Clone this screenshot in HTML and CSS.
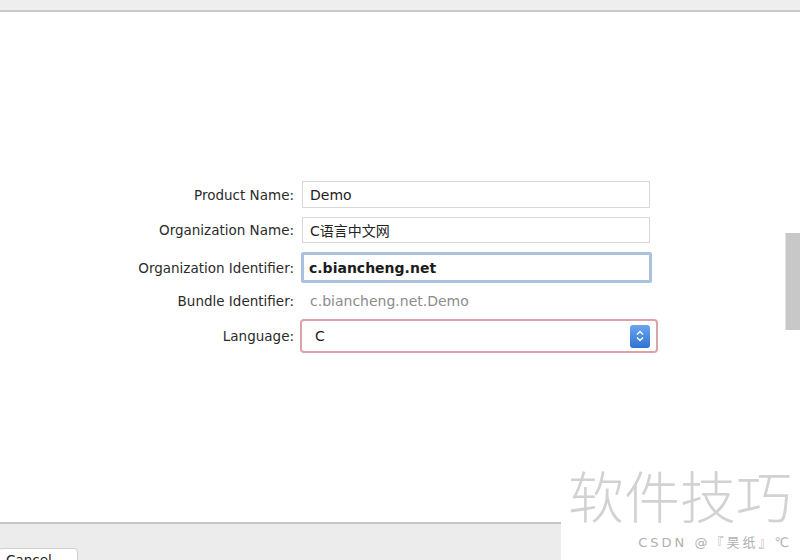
FILE: index.html
```html
<!DOCTYPE html>
<html lang="en">
<head>
<meta charset="UTF-8">
<meta name="viewport" content="width=device-width, initial-scale=1.0">
<title>New Project</title>
<link rel="stylesheet" href="styles.css">
</head>
<body>
<div class="window">
  <div class="titlebar"></div>
  <div class="sheet">
    <div class="form">
      <div class="label">Product Name:</div>
      <div class="field">Demo</div>

      <div class="label">Organization Name:</div>
      <div class="field">C语言中文网</div>

      <div class="label">Organization Identifier:</div>
      <div class="field focused">c.biancheng.net</div>

      <div class="label">Bundle Identifier:</div>
      <div class="value">c.biancheng.net.Demo</div>

      <div class="label">Language:</div>
      <div class="select">
        <span>C</span>
        <span class="stepper">
          <svg width="10" height="16" viewBox="0 0 10 16">
            <path d="M2 6.5 L5 3.5 L8 6.5" fill="none" stroke="#fff" stroke-width="1.4"/>
            <path d="M2 9.5 L5 12.5 L8 9.5" fill="none" stroke="#fff" stroke-width="1.4"/>
          </svg>
        </span>
      </div>
    </div>
  </div>
  <div class="footer">
    <div class="btn">Cancel</div>
  </div>
  <div class="scroll-thumb"></div>
  <div class="watermark">
    <div class="wm-big">软件技巧</div>
    <div class="wm-small">CSDN @『昊纸』℃</div>
  </div>
</div>
</body>
</html>
```

FILE: styles.css
```css
body {
  margin: 0;
  font-family: "DejaVu Sans", "Noto Sans CJK SC", sans-serif;
  background: #fff;
}
.window {
  position: relative;
  width: 800px;
  height: 560px;
  overflow: hidden;
  display: flex;
  flex-direction: column;
}
.titlebar {
  flex-shrink: 0;
  height: 10px;
  background: #eeeeee;
  border-bottom: 2px solid #c9c9c9;
}
.sheet {
  flex-shrink: 0;
  height: 510px;
  background: #fff;
  padding-top: 169px;
  box-sizing: border-box;
}
.form {
  display: grid;
  grid-template-columns: 294px 360px;
  grid-template-rows: 27px 26px 31px 18px 34px;
  row-gap: 9px;
  column-gap: 6px;
  align-items: center;
}
.form > .label {
  justify-self: end;
  font-size: 13.5px;
  color: #2b2b2b;
}
.field {
  box-sizing: border-box;
  margin-left: 2px;
  width: 348px;
  height: 100%;
  border: 1px solid #d8d8d8;
  background: #fff;
  font-size: 14px;
  color: #222;
  padding-left: 7px;
  display: flex;
  align-items: center;
}
.field.focused {
  margin-left: 1px;
  width: 351px;
  border: 3px solid #a9c3df;
  border-radius: 2px;
  padding-left: 5px;
  font-weight: bold;
  color: #1c1c1c;
}
.value {
  margin-left: 10px;
  font-size: 14px;
  color: #8c8c8c;
}
.select {
  box-sizing: border-box;
  width: 358px;
  height: 34px;
  border: 2px solid #dba3a6;
  border-radius: 4px;
  background: #fff;
  display: flex;
  align-items: center;
  justify-content: space-between;
  padding: 0 6px 0 13px;
  font-size: 14px;
  color: #222;
}
.stepper {
  width: 20px;
  height: 23px;
  border-radius: 3px;
  background: linear-gradient(#6aa6ec, #2f72d4);
  display: flex;
  align-items: center;
  justify-content: center;
}
.footer {
  flex: 1;
  min-height: 0;
  overflow: hidden;
  background: #ececec;
  border-top: 2px solid #c6c6c6;
  padding-top: 24px;
}
.btn {
  width: 80px;
  height: 22px;
  margin-left: -2px;
  box-sizing: border-box;
  background: #fff;
  border: 1px solid #cfcfcf;
  border-radius: 4px;
  font-size: 13.5px;
  color: #222;
  padding: 3px 0 0 7px;
}
.scroll-thumb {
  position: absolute;
  right: 0;
  top: 233px;
  width: 14px;
  height: 97px;
  background: #c8c8c8;
  border-left: 1px solid #e2e2e2;
}
.watermark {
  position: absolute;
  left: 561px;
  top: 460px;
  right: 0;
  bottom: 0;
  background: #fff;
  text-align: right;
  padding-right: 8px;
  white-space: nowrap;
}
.wm-big {
  font-family: "Noto Sans CJK SC", sans-serif;
  font-weight: 300;
  font-size: 56px;
  line-height: 68px;
  color: #d2d2d2;
}
.wm-small {
  font-family: "DejaVu Sans", "Noto Sans CJK SC", sans-serif;
  font-size: 13px;
  color: #b0b0b0;
  letter-spacing: 3px;
  margin-top: 4px;
}
```
